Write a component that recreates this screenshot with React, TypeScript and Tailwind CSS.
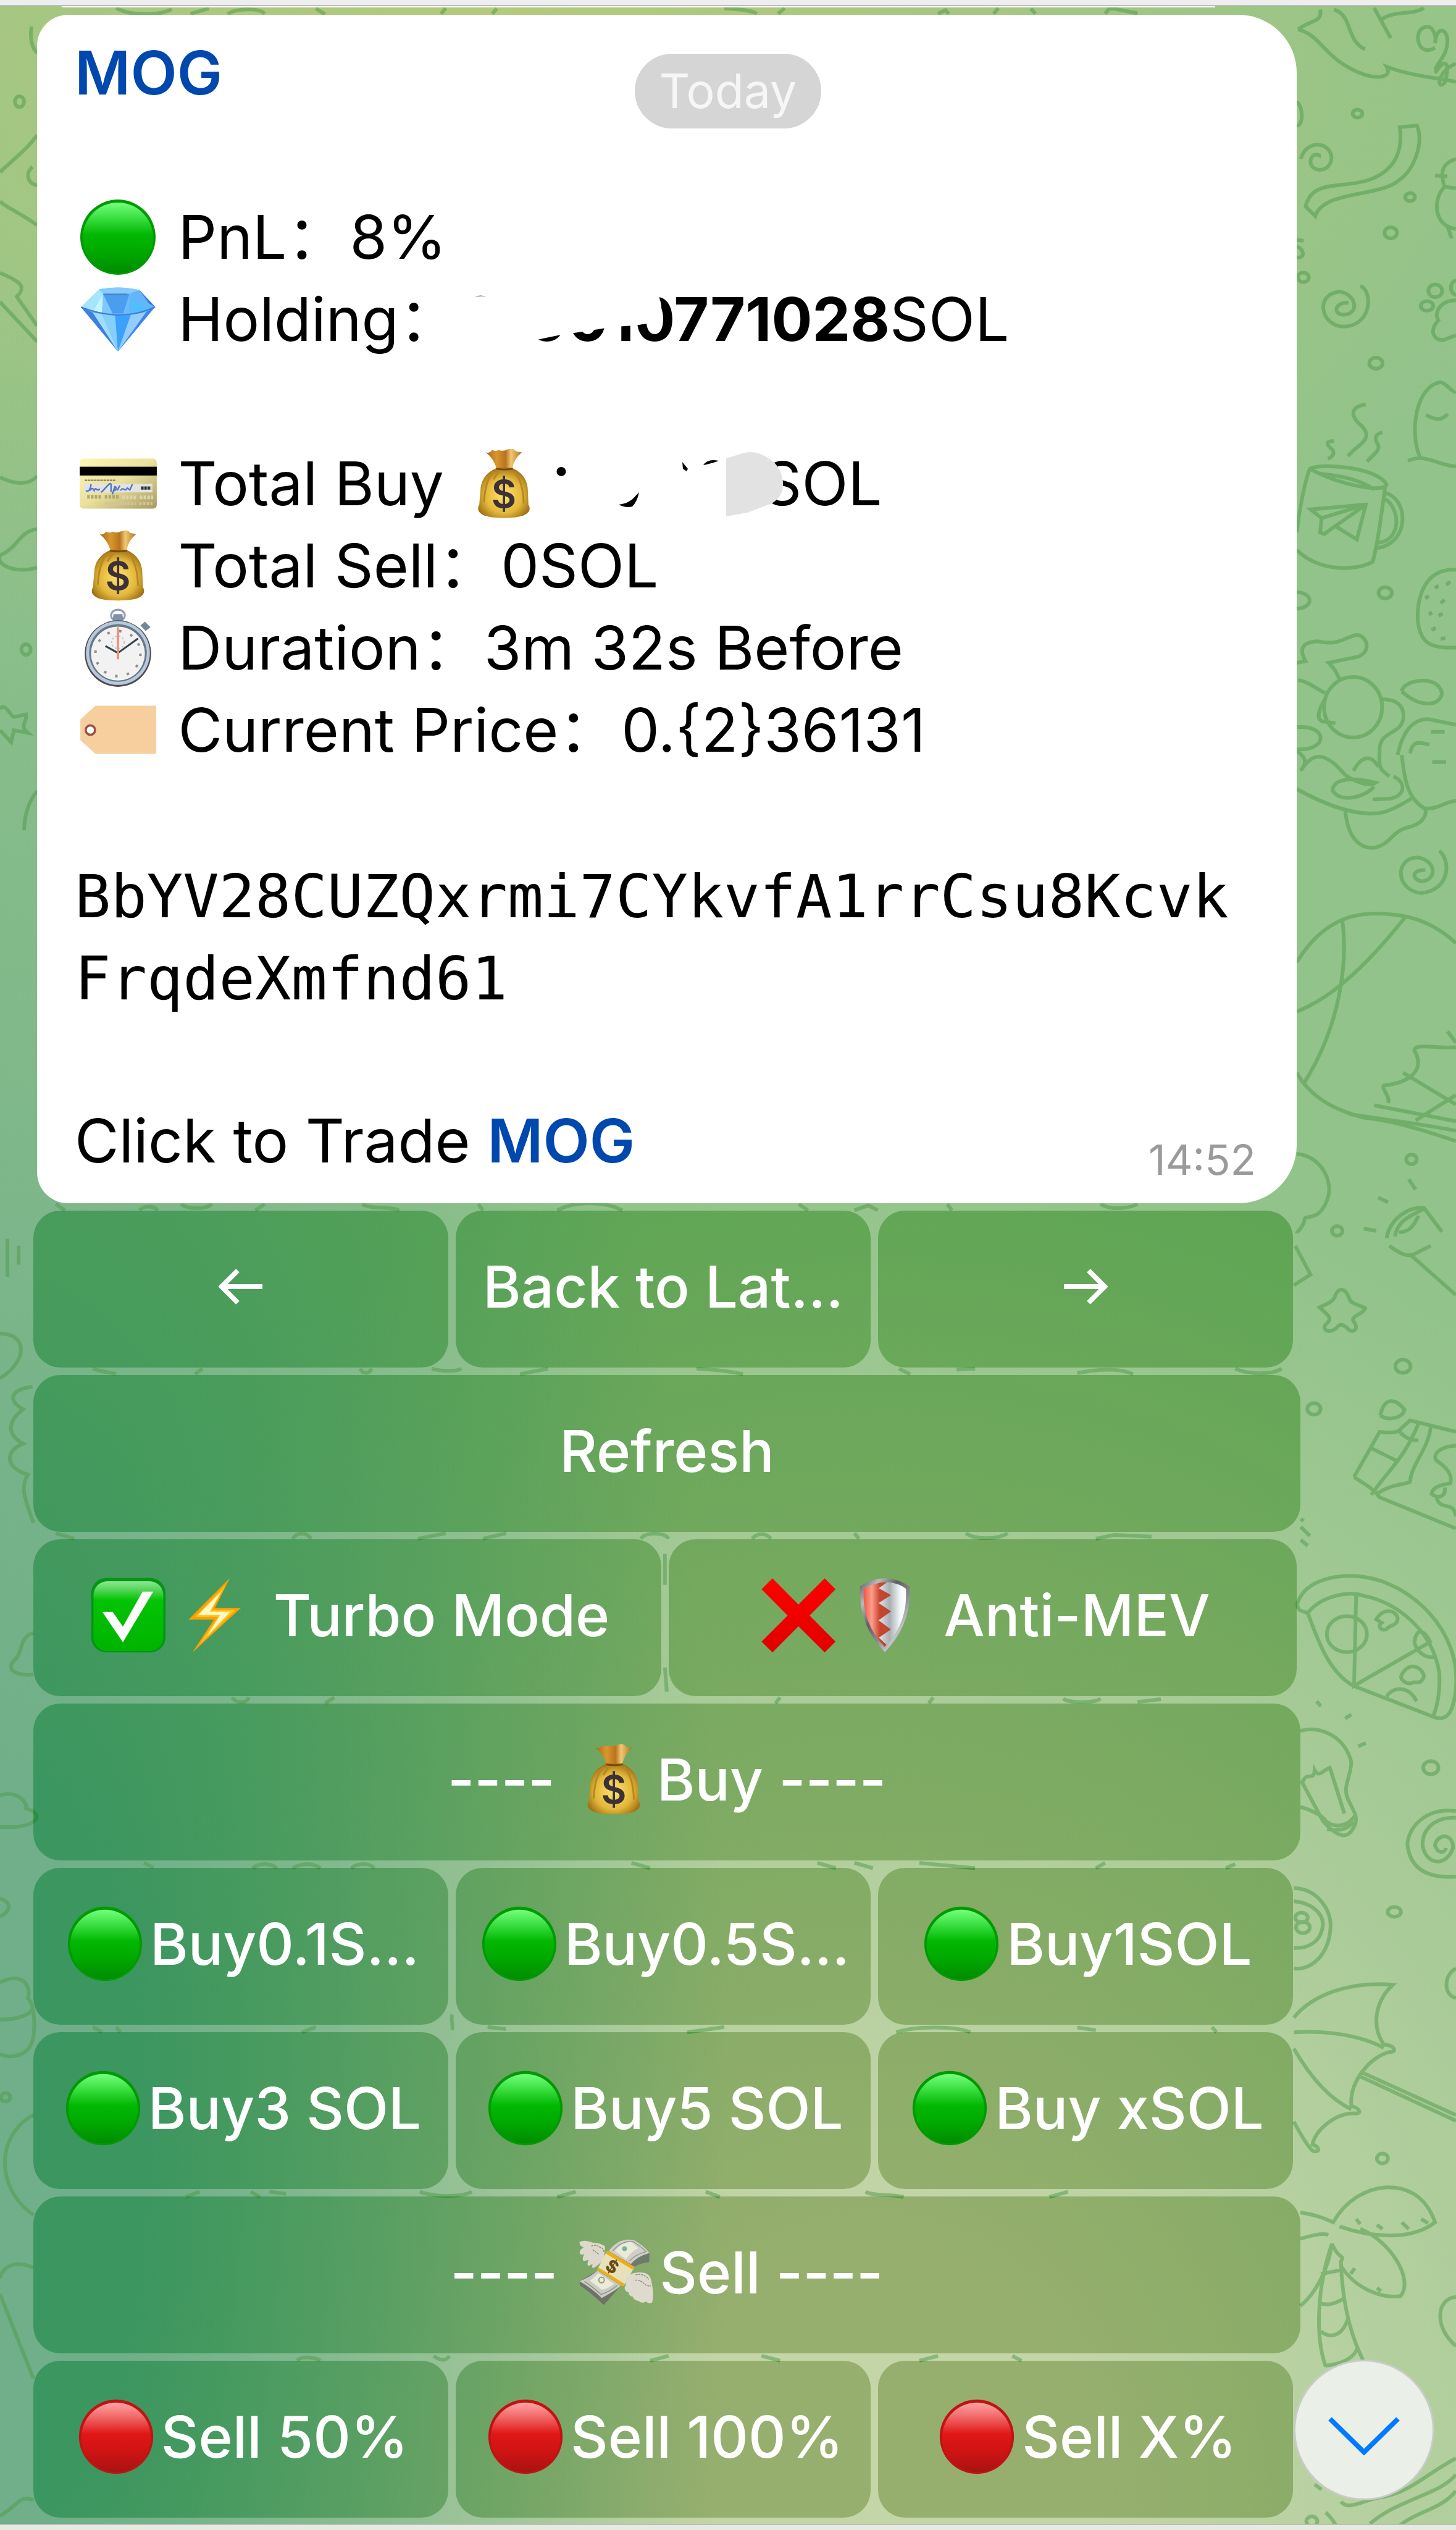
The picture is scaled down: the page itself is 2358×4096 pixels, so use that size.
import React from 'react';

type IconProps = { className?: string };

const CircleIcon: React.FC<IconProps & { color: 'green' | 'red' }> = ({ color, className }) => (
  <svg viewBox="0 0 140 140" className={className} aria-hidden="true">
    <defs>
      <linearGradient id="dot-green" x1="0" y1="0" x2="0" y2="1">
        <stop offset="0" stopColor="#74ff7c" />
        <stop offset="0.2" stopColor="#3fe246" />
        <stop offset="0.45" stopColor="#02b803" />
        <stop offset="0.7" stopColor="#00a900" />
        <stop offset="1" stopColor="#008c00" />
      </linearGradient>
      <linearGradient id="dot-red" x1="0" y1="0" x2="0" y2="1">
        <stop offset="0" stopColor="#ffa3a3" />
        <stop offset="0.2" stopColor="#f26a6a" />
        <stop offset="0.45" stopColor="#e01717" />
        <stop offset="0.7" stopColor="#cf1414" />
        <stop offset="1" stopColor="#a91212" />
      </linearGradient>
    </defs>
    {color === 'green' ? (
      <>
        <circle cx="70" cy="70" r="61" fill="#029a04" />
        <circle cx="70" cy="71" r="57" fill="url(#dot-green)" />
      </>
    ) : (
      <>
        <circle cx="70" cy="70" r="61" fill="#c01313" />
        <circle cx="70" cy="71" r="57" fill="url(#dot-red)" />
      </>
    )}
  </svg>
);

const DiamondIcon: React.FC<IconProps> = ({ className }) => (
  <svg viewBox="30 19 616 616" className={className} aria-hidden="true">
    <path d="M75 240 L205 112 Q350 85 490 118 L603 238 L338 556 Z" fill="#6bbcff" />
    <path d="M75 240 L205 112 L232 145 L160 268 Z" fill="#a5e6fb" />
    <path d="M205 112 Q350 85 490 118 L420 145 L232 145 Z" fill="#86cbfa" />
    <path d="M232 145 L160 268 L225 282 Z" fill="#c4f4fc" />
    <path d="M232 145 L225 282 L300 285 L272 200 Z" fill="#7fc9f8" />
    <path d="M232 145 L420 145 L375 285 L300 285 Z" fill="#4b9df0" />
    <path d="M420 145 L490 118 L603 238 L510 272 L415 285 Z" fill="#62b7fb" />
    <path d="M430 200 L560 250 L440 280 Z" fill="#4fc0ff" />
    <path d="M490 118 L603 238 L560 215 Z" fill="#2f78d8" />
    <path d="M75 240 L160 280 L338 556 Z" fill="#3f7fe0" />
    <path d="M160 280 L225 290 L338 556 Z" fill="#9fdcfd" />
    <path d="M225 290 L318 300 L338 556 Z" fill="#86cefc" />
    <path d="M318 300 L430 296 L338 556 Z" fill="#3aa2fb" />
    <path d="M430 296 L540 275 L338 556 Z" fill="#93cdfc" />
    <path d="M540 275 L603 238 L338 556 Z" fill="#3b86e6" />
    <path d="M75 240 Q200 290 330 296 Q480 298 603 238" fill="none" stroke="#3f7cd2" strokeWidth="9" />
    <path d="M235 148 L405 148" stroke="#4080c4" strokeWidth="8" />
  </svg>
);

const CardIcon: React.FC<IconProps> = ({ className }) => (
  <svg viewBox="0 0 138 138" className={className} aria-hidden="true">
    <defs>
      <linearGradient id="card" x1="0" y1="0" x2="1" y2="1">
        <stop offset="0" stopColor="#fdf7b4" />
        <stop offset="0.5" stopColor="#e9e09c" />
        <stop offset="1" stopColor="#a89a60" />
      </linearGradient>
    </defs>
    <rect x="8" y="29" width="123" height="80" rx="6" fill="url(#card)" />
    <rect x="8" y="42" width="123" height="14" fill="#000" />
    <path d="M16 63.5H66" stroke="#7c7550" strokeWidth="2" strokeDasharray="4 1" />
    <rect x="15" y="69" width="109" height="14" fill="#e2e2e2" />
    <path
      d="M18 80 C22 84 26 76 26 70 M24 80 C28 74 30 78 31 80 C34 72 36 84 40 77 M42 83 C50 76 56 66 58 70 L58 82 M60 86 L64 74 C68 74 66 80 63 80 M68 80 L72 72 M73 80 C78 72 80 84 84 76 L88 79 L92 70"
      fill="none"
      stroke="#5577c4"
      strokeWidth="2.4"
    />
    <path d="M106 76 H122" stroke="#2f2f2f" strokeWidth="5" strokeDasharray="4 1" />
    <path d="M20 90 H44 M48 90 H70" stroke="#b0a676" strokeWidth="6" strokeDasharray="4 2" />
    <path d="M76 91 H98 M104 91 H125" stroke="#ddd5ae" strokeWidth="6" strokeDasharray="4 2" />
    <path d="M48 101 H98 M103 101 H124" stroke="#cfc598" strokeWidth="5" strokeDasharray="4 2" />
  </svg>
);

const BagIcon: React.FC<IconProps> = ({ className }) => (
  <svg viewBox="-2 -2 142 142" className={className} aria-hidden="true">
    <defs>
      <radialGradient id="bag" cx="0.5" cy="0.55" r="0.6">
        <stop offset="0" stopColor="#ffe36b" />
        <stop offset="0.6" stopColor="#e2b73a" />
        <stop offset="1" stopColor="#94650f" />
      </radialGradient>
      <linearGradient id="bag-neck" x1="0" y1="0" x2="1" y2="0">
        <stop offset="0" stopColor="#a66a18" />
        <stop offset="0.3" stopColor="#d9962f" />
        <stop offset="0.55" stopColor="#b8741d" />
        <stop offset="0.7" stopColor="#f0c872" />
        <stop offset="1" stopColor="#b0741c" />
      </linearGradient>
    </defs>
    <path d="M39 17 Q46 19 49 13 Q56 16 60 13 Q68 16 75 12 Q86 9 89 15 L99 17 Q86 27 83 44 L57 44 Q52 27 39 17 Z" fill="url(#bag-neck)" />
    <path d="M57 43 H83 Q108 54 109 80 L110 104 Q116 114 104 121 Q94 126 69 126 Q44 126 34 121 Q22 114 28 104 L30 80 Q31 54 57 43 Z" fill="url(#bag)" />
    <path d="M56 44 Q69 47 84 44" stroke="#7a4a0c" strokeWidth="3" fill="none" />
    <path d="M52 49 Q38 62 36 100 M62 48 Q56 54 52 62 M86 49 Q101 64 102 102" stroke="#b98620" strokeWidth="3" fill="none" />
    <text x="69" y="109" textAnchor="middle" fontSize="64" fontWeight="600" fill="#3c3138" className="font-[Inter,sans-serif]">
      $
    </text>
  </svg>
);

const StopwatchIcon: React.FC<IconProps> = ({ className }) => (
  <svg viewBox="0 0 138 138" className={className} aria-hidden="true">
    <ellipse cx="69" cy="17" rx="11" ry="9" fill="none" stroke="#8fa0b0" strokeWidth="3" />
    <path d="M62 15 H76 L78 27 H60 Z" fill="#7d92a8" />
    <path d="M105 33 L112 27 L121 36 L113 42 Z" fill="#70879c" />
    <circle cx="69" cy="78" r="53" fill="#55494e" />
    <circle cx="69" cy="77" r="51" fill="#b4cadf" />
    <circle cx="69" cy="77" r="46" fill="#6b7884" />
    <circle cx="69" cy="78" r="43" fill="#f2f2f3" />
    <circle cx="69" cy="78" r="36" fill="none" stroke="#8f8f8f" strokeWidth="4" strokeDasharray="4 15" />
    <circle cx="69" cy="60" r="10" fill="none" stroke="#c8c8c8" strokeWidth="2" strokeDasharray="3 3" />
    <path d="M69 77 L49 66 M69 77 L101 54" stroke="#33434d" strokeWidth="3" />
    <path d="M69 36 V87" stroke="#f0937c" strokeWidth="4" />
  </svg>
);

const TagIcon: React.FC<IconProps> = ({ className }) => (
  <svg viewBox="0 0 138 138" className={className} aria-hidden="true">
    <path d="M33 30 H130 V107 H33 L9 85 V52 Z" fill="#f7cf9f" />
    <circle cx="25" cy="69" r="7.5" fill="#fff" stroke="#9a5443" strokeWidth="3.5" />
  </svg>
);

const CheckIcon: React.FC<IconProps> = ({ className }) => (
  <svg viewBox="6 51 624 624" className={className} aria-hidden="true">
    <defs>
      <linearGradient id="check-shine" x1="0" y1="0" x2="0" y2="1">
        <stop offset="0" stopColor="#8ee693" />
        <stop offset="0.12" stopColor="#54d65a" />
        <stop offset="0.27" stopColor="#03c404" />
        <stop offset="1" stopColor="#00b300" />
      </linearGradient>
    </defs>
    <rect x="49" y="94" width="537" height="537" rx="110" fill="#049614" />
    <rect x="66" y="118" width="504" height="504" rx="100" fill="url(#check-shine)" />
    <path d="M130 340 H205 L278 445 L420 193 H497 L278 558 Z" fill="#fff" />
  </svg>
);

const BoltIcon: React.FC<IconProps> = ({ className }) => (
  <svg viewBox="630 51 624 624" className={className} aria-hidden="true">
    <path d="M1050 95 L752 394 H935 L780 632 L1130 311 H942 Z" fill="#ffa000" />
    <path d="M1020 145 L800 375 H965 L830 575 L1090 325 H920 Z" fill="#ffc51e" />
    <path d="M990 190 L820 362 H980 L885 515 L1052 338 H905 Z" fill="#fff9c8" />
  </svg>
);

const CrossIcon: React.FC<IconProps> = ({ className }) => (
  <svg viewBox="38 51 624 624" className={className} aria-hidden="true">
    <defs>
      <linearGradient id="cross" x1="0" y1="0" x2="0" y2="1">
        <stop offset="0" stopColor="#ff0000" />
        <stop offset="1" stopColor="#e00000" />
      </linearGradient>
    </defs>
    <path d="M163 97 L350 286 L540 97 L618 176 L431 365 L618 554 L540 632 L350 443 L163 632 L84 554 L272 365 L84 176 Z" fill="url(#cross)" />
  </svg>
);

const ShieldIcon: React.FC<IconProps> = ({ className }) => (
  <svg viewBox="661 51 624 624" className={className} aria-hidden="true">
    <defs>
      <linearGradient id="shield-rim" x1="0" y1="0" x2="1" y2="1">
        <stop offset="0" stopColor="#55565a" />
        <stop offset="0.2" stopColor="#b9babc" />
        <stop offset="0.4" stopColor="#5e5f63" />
        <stop offset="0.6" stopColor="#8a8b8f" />
        <stop offset="0.75" stopColor="#c2c3c5" />
        <stop offset="1" stopColor="#505155" />
      </linearGradient>
      <linearGradient id="shield-red" x1="820" x2="1015" y1="0" y2="0" gradientUnits="userSpaceOnUse">
        <stop offset="0" stopColor="#f0583f" />
        <stop offset="0.3" stopColor="#ff9c8c" />
        <stop offset="0.6" stopColor="#c9452f" />
        <stop offset="1" stopColor="#b94632" />
      </linearGradient>
      <linearGradient id="shield-silver" x1="930" x2="1125" y1="0" y2="0" gradientUnits="userSpaceOnUse">
        <stop offset="0" stopColor="#dfe3e5" />
        <stop offset="0.4" stopColor="#a9afb3" />
        <stop offset="0.8" stopColor="#f5f9fb" />
        <stop offset="1" stopColor="#ffffff" />
      </linearGradient>
    </defs>
    <path d="M794 155 Q973 38 1152 155 Q1168 430 973 630 Q778 430 794 155 Z" fill="url(#shield-rim)" />
    <path d="M820 172 Q900 125 990 125 L930 168 L1018 218 L928 275 L1018 335 L928 400 L1018 466 L930 525 L985 575 L973 592 Q805 420 820 172 Z" fill="url(#shield-red)" />
    <path d="M990 125 Q1070 130 1126 172 Q1138 420 985 575 L930 525 L1018 466 L928 400 L1018 335 L928 275 L1018 218 L930 168 Z" fill="url(#shield-silver)" />
  </svg>
);

const MoneyWingsIcon: React.FC<IconProps> = ({ className }) => (
  <svg viewBox="48 33 624 624" className={className} aria-hidden="true">
    <path d="M280 160 Q250 130 190 130 Q130 105 95 125 Q90 150 125 165 Q90 185 97 210 Q110 220 130 215 Q108 250 125 262 L160 255 Q145 290 160 298 L190 285 Q180 312 195 314 Q235 290 270 250 Z" fill="#ddd8cb" />
    <path d="M180 155 Q210 140 245 165 Q275 175 270 200 M190 180 L235 215" fill="none" stroke="#8a867c" strokeWidth="6" strokeDasharray="14 6" />
    <path d="M95 408 L220 335 L395 440 L270 580 Q150 470 98 440 Z" fill="#6f7268" />
    <path d="M95 408 Q200 470 255 530 Q350 480 395 440 L225 332 Q170 380 95 408 Z" fill="#cbcac3" />
    <path d="M170 405 Q210 375 232 350 L345 428 Q300 465 255 470 Z" fill="#ecebd8" />
    <circle cx="254" cy="400" r="20" fill="none" stroke="#8d9c8f" strokeWidth="9" />
    <path d="M130 410 Q200 455 250 505 Q320 480 365 440" fill="none" stroke="#8c8c8c" strokeWidth="6" />
    <path d="M305 190 Q380 90 490 112 Q560 150 600 205 L598 272 Q540 275 490 305 Z" fill="#73786e" />
    <path d="M305 190 Q380 90 490 112 Q560 150 600 205 Q510 230 465 285 Z" fill="#cfcec7" />
    <path d="M350 190 Q400 125 470 125 L520 170 Q460 200 430 250 Z" fill="#e9ead8" />
    <circle cx="420" cy="174" r="17" fill="#76b394" />
    <path d="M335 190 Q395 115 480 122 Q530 150 575 195 Q500 215 455 262" fill="none" stroke="#8f8f8f" strokeWidth="6" />
    <path d="M290 195 L490 310 L415 440 L225 320 Z" fill="#e7e1bb" />
    <path d="M290 192 L305 192 L492 305 L480 325 L285 210 Z" fill="#f0ae14" />
    <path d="M230 308 L420 428 L408 447 L222 325 Z" fill="#f0ae14" />
    <text x="330" y="346" textAnchor="middle" fontSize="125" fontWeight="800" fill="#6b4a12" transform="rotate(32 330 305)" className="font-[Inter,sans-serif]">
      $
    </text>
    <path d="M420 410 Q440 350 520 345 Q600 340 612 400 Q635 500 620 560 Q600 580 575 555 Q545 575 520 550 Q485 545 480 520 Q450 515 450 490 Q420 480 420 455 Q440 420 420 410 Z" fill="#dedacd" />
    <path d="M500 362 Q560 350 595 395 M495 400 Q540 400 560 425 Q590 450 610 440" fill="none" stroke="#8a867c" strokeWidth="6" strokeDasharray="14 6" />
  </svg>
);

// Line art behind the chat. Every group keeps its own drawing grid.
const Wallpaper: React.FC = () => (
  <svg
    viewBox="0 0 2358 4096"
    preserveAspectRatio="xMidYMin slice"
    aria-hidden="true"
    className="absolute inset-0 -z-10 h-full w-full fill-none stroke-[#4f9a4a] stroke-6 opacity-50 [&_*]:[vector-effect:non-scaling-stroke]"
  >
    <g transform="translate(2017 0) scale(.2241 1.2865)">
      <path d="M380 37 C470 25 560 28 540 12 M640 12 C780 20 720 50 865 62 M380 37 C560 45 560 75 860 94 C980 100 1060 96 1020 84 C1200 96 1400 98 1521 103" />
      <path d="M930 10 L1050 48 M985 24 C1100 12 1200 20 1290 10" />
      <path d="M1370 60 C1230 75 1200 30 1330 34 C1370 38 1380 50 1370 54 C1380 34 1450 34 1460 50 C1460 70 1400 75 1370 88 M1370 92 C1450 70 1480 80 1440 104 C1380 115 1380 90 1521 80" />
      <path d="M371 128 C420 135 420 158 371 158 M371 302 L420 303 M371 310 C430 315 430 325 371 324" />
      <path d="M400 200 C440 175 610 178 622 198 C620 218 470 218 470 203 C480 190 540 196 545 196" />
      <path d="M435 260 C480 225 700 238 900 226 C1080 214 1140 190 1115 160 L1240 158 C1290 180 1220 215 1100 228 C960 248 560 240 505 272 Z" />
      <path d="M830 360 C920 365 920 410 710 411 C540 410 500 370 680 367 C800 370 830 395 710 396 C630 396 640 380 745 381" />
      <path d="M1521 200 C1430 205 1400 215 1440 235 L1521 237 M1370 221 L1460 222 M1440 235 C1350 250 1360 285 1521 288 M1460 285 L1490 300" />
      <path d="M1521 378 C1400 378 1360 395 1395 403 C1330 415 1350 428 1430 428 L1521 422" />
      <path d="M1260 575 C1180 540 1240 485 1410 481 C1450 482 1500 495 1521 493 M1175 580 C1300 570 1380 585 1521 587 M1305 522 C1380 530 1430 528 1460 521" />
      <path d="M640 555 C560 555 600 562 630 566 C650 572 620 576 595 577 M870 509 C760 512 760 522 820 533 C920 547 860 556 800 564 C770 568 760 570 740 574 M990 544 C920 547 940 555 960 560 C975 568 900 575 880 581" />
      <path d="M371 670 C390 640 430 605 465 590 C540 582 960 588 1020 610 C1000 620 700 612 465 590 M540 596 C620 598 800 600 930 616 M1010 612 C980 650 960 680 920 707 C780 720 520 718 371 692 M1000 620 C1180 625 1200 685 940 690 M1010 628 C1120 640 1130 680 960 683" />
      <path d="M470 641 L870 635 L805 679 L650 662 L570 672 L540 670 L550 652 Z M550 652 L870 635 L650 662" />
      <path d="M371 745 C500 747 490 765 371 766 M1521 717 C1300 715 1240 750 1245 780 C1260 810 1340 816 1521 815" />
      <path d="M1300 753 L1325 750 M1370 740 L1395 737 M1450 736 L1480 732 M1410 759 L1440 755 M1325 773 L1350 771 M1395 775 L1425 772 M1345 793 L1375 790 M1410 804 L1445 803" />
      <path d="M371 834 L435 832 C380 815 420 808 520 807 C680 814 740 799 810 799 C900 803 900 823 800 827 L600 834 C650 842 660 848 680 855" />
      <path d="M380 856 C450 857 520 868 575 872 M371 915 C600 912 600 945 371 943 M575 880 C540 890 500 905 560 908 L650 910 M985 880 C1130 880 1150 895 1140 905 C1120 925 960 920 970 945 C960 970 980 968 1040 977" />
      <path d="M1130 870 C1140 855 1400 848 1420 873 C1400 890 1250 890 1130 870 M371 945 C450 955 440 960 400 970 C520 935 640 960 720 975 C800 985 900 990 940 985 C700 975 630 985 630 995 C680 1010 850 1005 930 990 M780 970 C860 945 930 955 960 965" />
      <path d="M371 993 C550 1010 800 1030 1000 1022 C1080 1018 1150 1010 1200 1005 M720 1018 C740 1060 850 1068 930 1067 C1060 1062 1050 1045 1200 1040 C1300 1035 1320 1020 1290 1017 C1380 1020 1450 1008 1521 1008" />
      <path d="M1100 950 C1150 910 1250 905 1320 905 L1521 912 M1130 950 C1150 985 1180 1005 1290 1017 M1070 977 C1160 985 1160 1000 1050 1005 L920 1006 M1190 948 C1210 930 1260 935 1330 937 M1340 921 L1440 921 M1350 959 L1450 959" />
      <path d="M1400 1071 C1480 1080 1490 1120 1270 1124 C1080 1120 1080 1080 1240 1079 C1380 1082 1390 1108 1270 1109 C1200 1106 1200 1094 1300 1095" />
      <path d="M371 1211 C600 1145 900 1145 1150 1153 C1300 1158 1430 1172 1521 1187 M371 1273 C640 1255 900 1210 1160 1153 M700 1158 C740 1210 690 1290 420 1364 M371 1350 C480 1385 700 1400 870 1407 C1050 1410 1250 1420 1521 1436" />
      <path d="M750 1402 C1050 1410 1300 1415 1521 1423 M930 1391 L1521 1411 M1140 1350 L1521 1390 M1521 1318 C1400 1320 1220 1312 1220 1322 C1300 1345 1200 1362 1000 1366 C980 1370 1050 1380 1030 1388 M1230 1410 L1521 1378 M1460 1298 L1521 1312" />
      <path d="M371 1452 C560 1455 640 1490 590 1510 C540 1535 450 1530 430 1533 C420 1545 371 1550 371 1552 M960 1507 L1030 1513 M1180 1484 L1230 1497 M855 1546 L945 1549 M1020 1558 C1050 1530 1200 1518 1290 1520 L1420 1550 M1080 1556 C1100 1535 1200 1530 1290 1521 M1250 1530 C1200 1550 1150 1550 1110 1551" />
      <ellipse cx="778" cy="890" rx="210" ry="38" />
      <ellipse cx="810" cy="143" rx="35" ry="5" />
      <ellipse cx="1190" cy="248" rx="35" ry="5" />
      <ellipse cx="1050" cy="293" rx="45" ry="7" />
      <ellipse cx="418" cy="349" rx="40" ry="6" />
      <ellipse cx="1372" cy="366" rx="50" ry="8" />
      <ellipse cx="1312" cy="385" rx="45" ry="6" />
      <ellipse cx="1525" cy="362" rx="40" ry="9" />
      <ellipse cx="943" cy="457" rx="48" ry="7" />
      <ellipse cx="1010" cy="746" rx="48" ry="7" />
      <ellipse cx="1200" cy="1459" rx="38" ry="6" />
      <ellipse cx="663" cy="1549" rx="38" ry="6" />
    </g>
    <g transform="translate(2017 2017) scale(.2241 1.3263)">
      <path d="M360 0 L470 35 L350 48 M1040 0 C1200 20 1200 10 1340 0 M1200 12 L1521 60" />
      <path d="M535 75 C600 70 640 68 650 60 C680 50 720 52 745 62 C760 72 800 70 865 76 C850 84 760 85 780 92 C830 102 770 108 740 101 C700 95 680 95 660 100 C600 108 550 102 580 96 C640 88 590 84 535 75 Z" />
      <path d="M785 282 L970 227 C1030 228 1100 230 1130 222 L1190 213 L1521 227 M785 282 C850 290 920 295 970 307 L1521 345 M910 304 C1000 280 1150 260 1250 217 M910 247 L1100 263 M940 304 C1050 290 1150 292 1190 288 C1200 265 1320 250 1340 220 M1100 224 C1150 235 1200 238 1250 237" />
      <path d="M975 207 C1000 185 1080 185 1150 200 C1130 212 1020 213 975 207 M1521 244 C1400 245 1350 255 1380 262 C1450 270 1500 280 1480 290 C1400 292 1350 295 1345 303 C1400 310 1450 305 1440 295 M1380 308 C1420 325 1500 310 1521 330" />
      <path d="M400 333 L420 336 M400 343 L465 354 M400 359 L450 366" />
      <path d="M375 437 C430 405 700 400 850 404 C1200 412 1560 470 1521 540 C1500 575 1440 580 1360 575 L780 537 C600 520 520 480 450 448 C400 446 375 445 375 437 M450 448 C560 425 760 422 850 427 C1100 435 1350 470 1400 520 C1410 545 1390 560 1360 573 M800 427 L785 537 L1320 485" />
      <path d="M945 456 C1000 440 1100 445 1100 456 C1090 465 1040 462 1020 468 C980 470 950 465 985 460 Z M1125 525 C1180 505 1280 515 1290 525 C1270 538 1220 530 1200 534 C1160 535 1120 530 1125 525 M1220 484 C1240 465 1290 468 1340 485 M1220 484 C1250 500 1320 503 1370 502 M1020 550 C1080 535 1200 540 1235 556" />
      <path d="M515 556 L545 562 M720 577 L765 572 M815 611 L870 607" />
      <path d="M397 592 C550 585 720 600 765 630 C760 650 700 660 740 675 C780 690 810 695 795 705 C750 725 680 725 560 702 L410 655 C450 640 490 655 500 640 C530 650 560 640 610 637 L715 693 M397 685 C450 687 560 695 580 702 C650 712 740 708 790 696 M590 712 C680 715 740 712 780 703" />
      <path d="M1521 690 C1300 685 1180 710 1170 730 C1190 765 1350 772 1521 770 M1521 698 C1350 697 1280 715 1280 730 C1290 755 1450 760 1500 735 C1500 715 1380 718 1370 732 C1390 742 1440 742 1450 735" />
      <path d="M350 784 C520 785 620 810 615 832 C600 870 450 885 350 882 M350 800 C480 802 560 815 560 828 C550 850 450 858 350 857" />
      <path d="M350 942 C480 915 750 897 1065 902 C950 920 900 950 1000 975 C1080 975 1100 985 1040 984 C900 990 750 1020 765 1050 C820 1052 850 1060 790 1059 C650 1058 500 1080 485 1097 C540 1100 540 1107 490 1105 C450 1100 400 1085 350 1069 M350 980 C480 1018 620 1042 765 1054 M350 960 C600 957 850 965 1000 979 M830 1008 L1521 1061 M830 1014 L1521 1068" />
      <path d="M1521 882 C1430 890 1430 915 1521 918 M1521 1283 C1380 1285 1360 1320 1521 1343" />
      <path d="M397 1180 C500 1182 580 1188 635 1192 C800 1140 1250 1130 1370 1192 C1200 1215 900 1210 680 1197 M397 1212 C480 1208 540 1205 600 1207 M690 1245 C800 1275 1000 1285 1120 1282 C1220 1262 1050 1215 830 1200" />
      <path d="M397 1294 C500 1280 600 1250 625 1218 C520 1270 500 1330 580 1368 M625 1218 C680 1240 720 1230 690 1240 C700 1290 760 1330 850 1360 M545 1255 L700 1250 M530 1290 C600 1295 660 1290 710 1285 M545 1325 C620 1335 700 1330 740 1310 M580 1367 C680 1365 780 1360 810 1345" />
      <path d="M800 1188 L830 1194 M950 1195 L990 1200 M1130 1192 L1180 1200 M1270 1188 L1320 1193 M760 1255 L790 1248 M950 1272 L980 1276" />
      <path d="M500 1512 L550 1518 M690 1533 C750 1545 850 1530 1000 1527 C1200 1520 1300 1500 1521 1480 M580 1546 C640 1555 660 1565 680 1568 M900 1560 C1100 1530 1400 1525 1521 1500 M1080 1568 C1200 1545 1400 1545 1521 1520" />
      <ellipse cx="733" cy="474" rx="145" ry="22" />
      <ellipse cx="1138" cy="147" rx="55" ry="8" />
      <ellipse cx="495" cy="199" rx="48" ry="7" />
      <ellipse cx="1340" cy="637" rx="55" ry="8" />
      <ellipse cx="1076" cy="813" rx="48" ry="6" />
      <ellipse cx="405" cy="820" rx="45" ry="6" />
      <ellipse cx="415" cy="832" rx="50" ry="7" />
      <ellipse cx="990" cy="1114" rx="40" ry="6" />
      <ellipse cx="480" cy="1557" rx="40" ry="6" />
    </g>
    <g transform="scale(1.504 .4288)">
      <path d="M125 30 C140 60 170 60 185 35 M205 52 L225 32 M245 52 C255 30 280 30 285 52 M340 32 L350 54 M475 52 L480 30 M535 32 L530 52 M780 32 C800 35 810 40 815 52 M845 30 L838 52 M1010 52 L1018 38 L1022 52 M1070 52 L1075 30 M1110 32 L1115 52 M1190 52 L1195 30 L1225 50" />
      <path d="M0 650 C15 600 30 560 40 510 M40 850 C20 800 5 780 0 760 M35 630 C28 650 28 690 40 700 M34 100 C32 140 34 180 40 200 M0 1030 C20 1060 30 1080 18 1120 L40 1230 M0 1140 L40 1290" />
      <ellipse cx="21" cy="384" rx="5" ry="20" />
    </g>
    <g transform="translate(0 672) scale(1.504 .4288)">
      <path d="M0 235 C15 260 30 270 40 230 M40 430 C20 440 20 500 0 530 C-5 570 20 600 40 575 M0 1110 C5 1080 12 1140 15 1140 L28 1130 C30 1160 20 1170 30 1200 L15 1190 L12 1235 L0 1190 M40 1420 C30 1460 26 1520 26 1568" />
      <ellipse cx="28" cy="885" rx="5" ry="20" />
    </g>
    <g transform="translate(0 1936) scale(1.504 .5574)">
      <path d="M8 125 L8 235 M20 145 L20 200 M0 400 C30 400 30 480 0 530 M35 555 C15 560 5 590 25 620 C10 650 5 690 25 720 C5 740 5 790 30 810 C20 850 30 900 36 950 M36 1270 C20 1280 25 1330 15 1350 C5 1380 20 1395 36 1390" />
      <path d="M60 24 L70 42 M150 42 C155 28 165 28 170 42 M195 24 C202 40 222 40 228 24 M275 42 L285 24 M390 24 C400 40 420 30 430 42 M515 24 L520 42 M600 42 C620 15 650 15 670 42 M860 24 L870 42 M920 42 L935 28 L945 42 M1020 24 L1025 42 M1185 24 C1195 40 1212 40 1225 24" />
      <path d="M100 502 C110 512 120 512 125 518 M210 518 L218 502 M388 502 C390 518 398 518 400 502 M465 502 C475 510 490 512 497 502 M560 518 L590 502 M750 502 C770 505 790 512 800 518 M968 502 L980 518 M1030 505 L1050 502 M1160 515 C1190 498 1210 505 1220 518 M1330 502 C1345 520 1370 520 1380 502" />
      <path d="M60 980 L80 996 M315 996 C320 976 330 976 335 996 M450 996 L480 980 M520 996 L545 980 M690 996 C695 976 715 976 720 996 M810 996 C815 978 825 978 830 996 M920 980 L925 996 M1040 980 C1050 1000 1075 998 1085 980 M1180 996 L1200 985 L1240 990" />
      <path d="M250 1457 C255 1476 265 1476 268 1457 M350 1474 L360 1457 M716 1040 L716 1130 M716 1370 L718 1440 M835 1474 L840 1457 M1000 1474 L1005 1457 M1145 1460 C1150 1474 1180 1474 1185 1460 M1225 1470 L1250 1462" />
    </g>
    <g transform="translate(0 2757) scale(1.504 .8546)">
      <path d="M0 175 C20 165 30 190 28 200 C50 210 40 240 0 235 M0 370 C15 380 10 395 0 405 M0 530 C20 510 35 530 30 560 C38 570 38 620 35 640 C30 670 10 675 0 665 M0 600 C20 600 32 590 35 580 M36 780 C-5 820 -5 920 36 970 M36 1070 C10 1050 0 1080 0 1090 M0 1120 L36 1280 M0 1540 C20 1520 20 1500 36 1510" />
      <path d="M155 303 L165 312 M272 313 C278 303 292 303 298 313 M315 313 C325 303 337 303 345 313 M378 313 C385 303 398 303 403 313 M680 303 L700 313 M880 303 L900 313 M920 303 L940 313 M990 303 L1050 313 M1180 313 L1190 303 M1320 313 L1330 305" />
      <path d="M100 614 L110 624 M125 614 L130 624 M340 614 L325 624 M487 590 C485 600 488 610 487 620 M525 614 L545 618 M740 624 L780 614 M965 624 C985 612 1030 612 1045 624 M1160 615 L1180 620 M1305 614 L1310 624" />
      <path d="M200 936 L215 926 M270 926 L280 936 M290 926 L308 930 M452 926 C470 938 500 935 508 926 M600 936 L620 926 M760 926 L775 936 M932 926 C940 935 960 930 973 936 M1130 936 L1150 926" />
      <path d="M320 1246 C325 1236 340 1240 345 1246 M467 1237 C475 1247 480 1247 484 1237 M700 1246 L720 1237 M820 1237 L840 1246 M990 1246 L1010 1237 M1090 1237 L1100 1246" />
      <ellipse cx="6" cy="747" rx="5" ry="8" />
    </g>
  </svg>
);

const ArrowIcon: React.FC<{ flip?: boolean }> = ({ flip }) => (
  <svg viewBox="0 0 72 60" className={`h-[60px] w-[72px] ${flip ? 'rotate-180' : ''}`} aria-hidden="true">
    <path d="M31 4 L5 30 L31 56 M6 30 H71" fill="none" stroke="#fff" strokeWidth="8" />
  </svg>
);

const bodyIcon = 'size-[140px] shrink-0';
const keyIcon = 'size-[140px] shrink-0';
const dotIcon = 'mr-1 size-[138px] shrink-0';

const Line: React.FC<{ children?: React.ReactNode }> = ({ children }) => (
  <div className="flex h-[133px] items-center whitespace-pre">{children}</div>
);

const Field: React.FC<{ label: string; children?: React.ReactNode }> = ({ label, children }) => (
  <>
    <span className="mr-1"> {label}：</span>
    <span>{children}</span>
  </>
);

const Key: React.FC<{ children: React.ReactNode; label?: string }> = ({ children, label }) => (
  <button
    type="button"
    aria-label={label}
    className="flex h-[254px] min-w-0 flex-1 items-center justify-center overflow-hidden rounded-[44px] pb-2 whitespace-pre backdrop-brightness-[.8] backdrop-saturate-[1.8]"
  >
    {children}
  </button>
);

const App: React.FC = () => {
  return (
    <div className="relative isolate flex min-h-screen flex-col overflow-hidden bg-[#92c38b] bg-[radial-gradient(ellipse_50%_75%_at_0%_85%,#70af89_20%,transparent),radial-gradient(ellipse_75%_30%_at_35%_0%,#b4ca7b,transparent),radial-gradient(ellipse_80%_55%_at_60%_100%,#c4d5a8_20%,transparent)] font-[Inter,'Noto_Sans_CJK_SC',sans-serif] text-[98px] leading-[133px] text-black">
      <Wallpaper />

      <header className="h-[10px] border-b-2 border-[#bcbcbc] bg-[#efeeee]" />
      <div className="mr-[390px] ml-[100px] h-[2px] bg-white" />

      <div className="absolute inset-x-0 top-[87px] flex justify-center">
        <span className="rounded-full bg-[#d5d5d5] px-[40px] text-[77px] leading-[121px] text-[#f6f6f6]">Today</span>
      </div>

      <main className="flex flex-1 flex-col gap-3 pt-3 pr-[252px] pb-2 pl-[54px]">
        <article className="-z-[1] mx-[6px] rounded-l-[50px] rounded-r-[94px] bg-white pt-[27px] pr-[66px] pb-[35px] pl-[61px]">
          <Line>
            <a href="#mog" className="font-semibold text-[#0048ad]">MOG</a>
          </Line>
          <Line />
          <Line>
            <CircleIcon color="green" className={bodyIcon} />
            <Field label="PnL">8%</Field>
          </Line>
          <Line>
            <DiamondIcon className={bodyIcon} />
            <Field label="Holding" />
            <span className="relative ml-3 font-bold">
              0.0010771028
              <svg viewBox="505 1050 447 310" preserveAspectRatio="none" className="absolute inset-0 h-full w-full overflow-visible" aria-hidden="true">
                <path d="M490 1050 L706 1050 L707 1125 Q712 1180 706 1215 L684 1228 L655 1236 L634 1248 L600 1266 L588 1275 L560 1296 L490 1330 Z" fill="#fff" />
                <path d="M511 1122 Q516 1112 523 1120 Q516 1117 511 1122 Z" fill="#555" />
              </svg>
            </span>
            <span>SOL</span>
          </Line>
          <Line />
          <Line>
            <CardIcon className={bodyIcon} />
            <span> Total Buy </span>
            <BagIcon className="size-[138px] shrink-0" />
            <span>：</span>
            <svg viewBox="985 716 253 133" className="relative h-[133px] w-[253px] shrink-0 overflow-visible" aria-hidden="true">
              <path d="M880 778 H975 V840 H880 Z" fill="#fff" />
              <path d="M1004 817 Q1022 815 1032 802 L1037 797 Q1034 812 1026 820 Q1016 823 1004 817 Z" fill="#000" />
              <path d="M1107 748 L1116 759 L1114 763 L1108 759 Z M1141 753 Q1148 742 1166 746 Q1156 750 1141 753 Z" fill="#000" />
              <path d="M1178 742 L1208 733 Q1228 729 1246 742 Q1266 752 1270 780 Q1272 802 1252 815 L1212 830 L1178 836 Z" fill="#e2e2e2" />
            </svg>
            <span>SOL</span>
          </Line>
          <Line>
            <BagIcon className={bodyIcon} />
            <Field label="Total Sell">0SOL</Field>
          </Line>
          <Line>
            <StopwatchIcon className={bodyIcon} />
            <Field label="Duration">3m 32s Before</Field>
          </Line>
          <Line>
            <TagIcon className={bodyIcon} />
            <Field label="Current Price">0.{'{2}'}36131</Field>
          </Line>
          <Line />
          <p className="-mb-1 pt-1 font-['DejaVu_Sans_Mono',monospace] text-[97px] break-all">BbYV28CUZQxrmi7CYkvfA1rrCsu8KcvkFrqdeXmfnd61</p>
          <Line />
          <div className="flex justify-between">
            <p>
              Click to Trade <a href="#mog" className="font-semibold text-[#0048ad]">MOG</a>
            </p>
            <time className="self-end text-[68px] leading-[72px] text-[#9a9a9a]">14:52</time>
          </div>
        </article>

        <nav className="flex flex-col gap-3 text-[94px] font-medium text-white">
          <div className="flex gap-3 pr-3">
            <Key label="Previous"><ArrowIcon /></Key>
            <Key>Back to Lat...</Key>
            <Key label="Next"><ArrowIcon flip /></Key>
          </div>
          <div className="flex">
            <Key>Refresh</Key>
          </div>
          <div className="flex gap-3 pr-[6px]">
            <Key><CheckIcon className={keyIcon} /><BoltIcon className={keyIcon} /> Turbo Mode</Key>
            <Key><CrossIcon className={keyIcon} /><ShieldIcon className={keyIcon} /> Anti-MEV</Key>
          </div>
          <div className="flex">
            <Key>---- <BagIcon className={keyIcon} />Buy ----</Key>
          </div>
          <div className="flex gap-3 pr-3">
            <Key><CircleIcon color="green" className={dotIcon} />Buy0.1S...</Key>
            <Key><CircleIcon color="green" className={dotIcon} />Buy0.5S...</Key>
            <Key><CircleIcon color="green" className={dotIcon} />Buy1SOL</Key>
          </div>
          <div className="flex gap-3 pr-3">
            <Key><CircleIcon color="green" className={dotIcon} />Buy3 SOL</Key>
            <Key><CircleIcon color="green" className={dotIcon} />Buy5 SOL</Key>
            <Key><CircleIcon color="green" className={dotIcon} />Buy xSOL</Key>
          </div>
          <div className="flex">
            <Key>---- <MoneyWingsIcon className={keyIcon} />Sell ----</Key>
          </div>
          <div className="flex gap-3 pr-3">
            <Key><CircleIcon color="red" className={dotIcon} />Sell 50%</Key>
            <Key><CircleIcon color="red" className={dotIcon} />Sell 100%</Key>
            <Key><CircleIcon color="red" className={dotIcon} />Sell X%</Key>
          </div>
        </nav>
      </main>

      <footer className="h-[10px] border-t-2 border-[#bcbcbc] bg-[#e6ebe2]" />

      <button
        type="button"
        aria-label="Scroll to bottom"
        className="absolute right-[35px] bottom-[48px] flex size-[228px] items-center justify-center rounded-full border-3 border-[#c9cbc8] bg-[#eaefe7]"
      >
        <svg viewBox="0 0 116 62" className="mt-5 h-[62px] w-[116px]" aria-hidden="true">
          <path d="M3 3 L58 57 L113 3" fill="none" stroke="#007aff" strokeWidth="8" />
        </svg>
      </button>
    </div>
  );
};

export default App;
